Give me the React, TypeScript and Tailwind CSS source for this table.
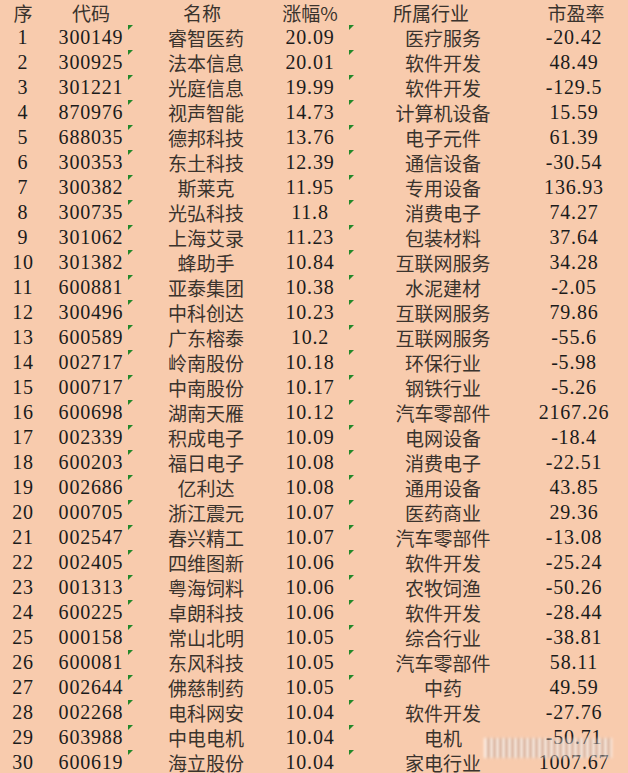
import React from 'react';

const rows: [string, string, string, string, string][] = [
  ['300149', '睿智医药', '20.09', '医疗服务', '-20.42'],
  ['300925', '法本信息', '20.01', '软件开发', '48.49'],
  ['301221', '光庭信息', '19.99', '软件开发', '-129.5'],
  ['870976', '视声智能', '14.73', '计算机设备', '15.59'],
  ['688035', '德邦科技', '13.76', '电子元件', '61.39'],
  ['300353', '东土科技', '12.39', '通信设备', '-30.54'],
  ['300382', '斯莱克', '11.95', '专用设备', '136.93'],
  ['300735', '光弘科技', '11.8', '消费电子', '74.27'],
  ['301062', '上海艾录', '11.23', '包装材料', '37.64'],
  ['301382', '蜂助手', '10.84', '互联网服务', '34.28'],
  ['600881', '亚泰集团', '10.38', '水泥建材', '-2.05'],
  ['300496', '中科创达', '10.23', '互联网服务', '79.86'],
  ['600589', '广东榕泰', '10.2', '互联网服务', '-55.6'],
  ['002717', '岭南股份', '10.18', '环保行业', '-5.98'],
  ['000717', '中南股份', '10.17', '钢铁行业', '-5.26'],
  ['600698', '湖南天雁', '10.12', '汽车零部件', '2167.26'],
  ['002339', '积成电子', '10.09', '电网设备', '-18.4'],
  ['600203', '福日电子', '10.08', '消费电子', '-22.51'],
  ['002686', '亿利达', '10.08', '通用设备', '43.85'],
  ['000705', '浙江震元', '10.07', '医药商业', '29.36'],
  ['002547', '春兴精工', '10.07', '汽车零部件', '-13.08'],
  ['002405', '四维图新', '10.06', '软件开发', '-25.24'],
  ['001313', '粤海饲料', '10.06', '农牧饲渔', '-50.26'],
  ['600225', '卓朗科技', '10.06', '软件开发', '-28.44'],
  ['000158', '常山北明', '10.05', '综合行业', '-38.81'],
  ['600081', '东风科技', '10.05', '汽车零部件', '58.11'],
  ['002644', '佛慈制药', '10.05', '中药', '49.59'],
  ['002268', '电科网安', '10.04', '软件开发', '-27.76'],
  ['603988', '中电电机', '10.04', '电机', '-50.71'],
  ['600619', '海立股份', '10.04', '家电行业', '1007.67'],
];

const grid = 'grid grid-cols-[46px_90px_140px_68px_198px_64px] h-[25px] items-center';
const num = "flex justify-center whitespace-nowrap text-[20px] leading-[25px] tracking-[0.8px] font-['Liberation_Serif',serif] text-[#1b1b1b]";
const cjk = "flex justify-center whitespace-nowrap text-[19px] leading-[25px] font-['Noto_Sans_CJK_SC',sans-serif] text-[#3a332d]";

const Flag = ({ left }: { left: string }) => (
  <svg className={`absolute top-0 ${left}`} width="5" height="5" viewBox="0 0 5 5">
    <polygon points="0,0 5,0 0,5" fill="#23882a" />
  </svg>
);

export default function App() {
  return (
    <div className="w-[628px] h-[773px] overflow-hidden bg-[#f8cbad] relative">
      <div className={grid}>
        <div className={cjk}>序</div>
        <div className={cjk}>代码</div>
        <div className={`${cjk} pr-[8px]`}>名称</div>
        <div className={cjk}>涨幅%</div>
        <div className={`${cjk} pr-[24px]`}>所属行业</div>
        <div className={`${cjk} pl-[4px]`}>市盈率</div>
      </div>
      {rows.map((r, i) => (
        <div key={r[0]} className={`${grid} relative`}>
          <div className={num}>{i + 1}</div>
          <div className={num}>{r[0]}</div>
          <div className={cjk}>{r[1]}</div>
          <div className={num}>{r[2]}</div>
          <div className={cjk}>{r[3]}</div>
          <div className={num}>{r[4]}</div>
          <Flag left="left-[128px]" />
          <Flag left="left-[349px]" />
        </div>
      ))}
      {/* blurred watermark bottom right */}
      <div className="absolute left-[484px] top-[738px] w-[128px] h-[20px] blur-[1.5px] opacity-80 bg-[repeating-linear-gradient(90deg,rgba(255,255,255,0.9)_0px,rgba(255,255,255,0.9)_3px,rgba(120,90,80,0.35)_3px,rgba(120,90,80,0.35)_6px)]" />
    </div>
  );
}
